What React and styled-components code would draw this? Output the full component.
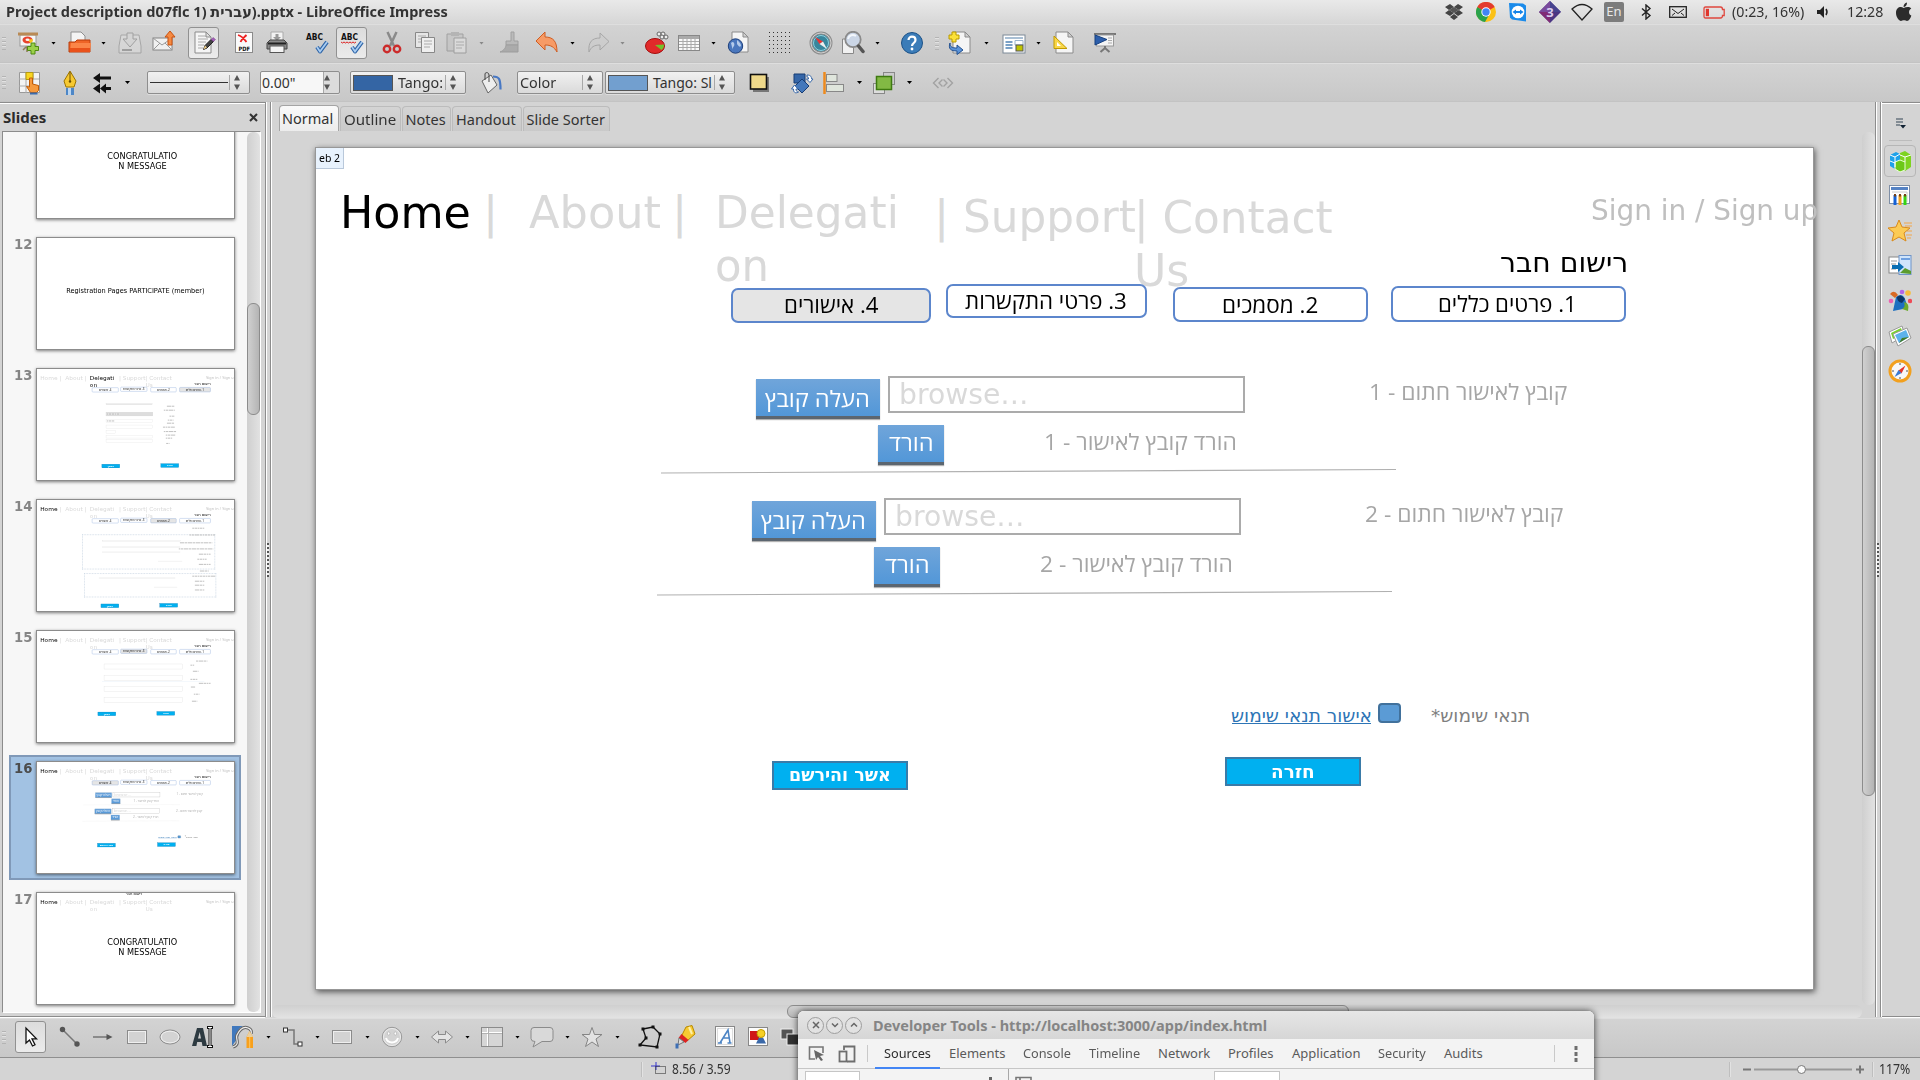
import React, { useLayoutEffect, useRef } from "react";
import styled, { createGlobalStyle, css } from "styled-components";

const UI = `"Noto Sans", "Open Sans", sans-serif`;
const DEJAVU = `"DejaVu Sans", sans-serif`;
const HEB = `"Open Sans", "DejaVu Sans", sans-serif`;

const Global = createGlobalStyle`
  * { box-sizing: border-box; }
  html, body { margin: 0; padding: 0; background: #d4d4d4; overflow: hidden; }
  body { font-family: ${UI}; font-size: 14px; color: #333; }
`;

/* ---------- text fitted to a width ---------- */
const FitBox = styled.span`
  display: inline-flex;
  flex: none;
  direction: ltr;
  width: ${(p) => p.$w}px;
  white-space: pre;
`;
const FitInner = styled.span`
  flex: none;
  display: block;
  transform-origin: 0 50%;
  direction: ${(p) => (p.$rtl ? "rtl" : "ltr")};
`;
function Fit({ w, rtl, children }) {
  const ref = useRef(null);
  useLayoutEffect(() => {
    const el = ref.current;
    if (el.offsetWidth) el.style.transform = `scaleX(${w / el.offsetWidth})`;
  }, [w]);
  return (
    <FitBox $w={w}>
      <FitInner ref={ref} $rtl={rtl}>{children}</FitInner>
    </FitBox>
  );
}

/* ---------- frame ---------- */
const Screen = styled.div`
  position: relative;
  display: flex;
  flex-direction: column;
  width: 1920px;
  height: 1080px;
  overflow: hidden;
  background: #d4d4d4;
`;
const MenuBar = styled.header`
  display: flex;
  align-items: center;
  height: 24px;
  padding: 0 8px 0 6px;
  background: linear-gradient(#e9e9e9, #d6d6d6);
  justify-content: space-between;
`;
const WindowTitle = styled.div`
  font-family: "Noto Sans", "Open Sans", "DejaVu Sans", sans-serif;
  font-weight: 700;
  font-size: 15px;
  line-height: 20px;
  height: 24px;
  padding-top: 1px;
  color: #333;
`;
const HebRun = styled.span`
  font-family: "DejaVu Sans", sans-serif;
`;
const Tray = styled.div`
  display: flex;
  align-items: center;
  height: 24px;
  font-size: 15px;
  color: #333;
`;
const TrayText = styled.div`
  height: 24px;
  line-height: 22px;
`;
const TraySlot = styled.div`
  display: flex;
  flex: none;
  align-items: center;
  justify-content: center;
  width: ${(p) => p.$w}px;
`;
const LangBox = styled.div`
  width: 20px;
  height: 20px;
  border-radius: 2px;
  background: #7c7c7c;
  color: #e9e9e9;
  font-size: 13px;
  line-height: 19px;
  text-align: center;
`;

const ToolBar = styled.div`
  display: flex;
  align-items: center;
  flex: none;
  height: ${(p) => p.$h || 39}px;
  padding-bottom: ${(p) => p.$pb || 0}px;
  border-top: 1px solid #dedede;
  border-bottom: 1px solid ${(p) => p.$line || "#c3c3c3"};
  background: linear-gradient(#d3d3d3, #c8c8c8);
`;
const Slot = styled.div`
  display: flex;
  flex: none;
  align-items: center;
  justify-content: center;
  width: ${(p) => p.$w || 24}px;
  height: 32px;
  margin-left: ${(p) => p.$ml || 0}px;
  opacity: ${(p) => (p.$dim ? 0.38 : 1)};
  filter: ${(p) => (p.$dim ? "grayscale(1)" : "none")};
  ${(p) =>
    p.$on &&
    css`
      border: 1px solid #919191;
      border-radius: 3px;
      background: linear-gradient(#dcdcdc, #ebebeb);
    `}
`;
const Grip = styled.div`
  flex: none;
  width: 4px;
  height: 13px;
  margin-left: ${(p) => p.$ml}px;
  margin-right: 2px;
  background: repeating-linear-gradient(#b4b4b4 0 1px, #e2e2e2 1px 2px, transparent 2px 4px);
`;
const Caret = styled.div`
  flex: none;
  width: 8px;
  height: 3px;
  padding-left: 1px;
  margin-left: ${(p) => p.$ml}px;
  &::after {
    content: "";
    display: block;
    width: 5px;
    height: 3px;
    clip-path: polygon(0 0, 100% 0, 50% 100%);
    background: ${(p) => (p.$dim ? "#888" : "#000")};
  }
`;
const Combo = styled.div`
  display: flex;
  align-items: center;
  flex: none;
  width: ${(p) => p.$w}px;
  height: 23px;
  margin-left: ${(p) => p.$ml}px;
  padding: 0 8px 0 ${(p) => p.$pl || 2}px;
  border: 1px solid #8e8e8e;
  border-radius: 2px;
  background: ${(p) => (p.$entry ? "linear-gradient(90deg, #f7f7f7 62px, #a8a8a8 62px 63px, #dcdcdc 63px)" : "linear-gradient(#f1f1f1, #dadada)")};
  font-size: 14px;
  color: #333;
  box-shadow: 0 1px 0 #dedede;
`;
const Grow = styled.div`
  flex: 1;
`;
const Rule = styled.div`
  width: 78px;
  height: 1px;
  background: #333;
`;
const Swatch = styled.div`
  flex: none;
  width: ${(p) => p.$w || 40}px;
  height: 16px;
  margin-right: 5px;
  border: 1px solid #555;
  background: ${(p) => p.$c};
`;
const Sep = styled.div`
  flex: none;
  width: 1px;
  height: 15px;
  margin-right: 3px;
  background: #a8a8a8;
`;

/* ---------- work area ---------- */
const Middle = styled.main`
  display: flex;
  flex: none;
  height: 916px;
`;
const LeftPane = styled.aside`
  display: flex;
  flex-direction: column;
  width: 265px;
  height: 915px;
  border-top: 1px solid #8c8c8c;
  border-bottom: 1px solid #8c8c8c;
  box-shadow: inset 0 1px 0 #fff, 0 1px 0 #fff;
`;
const PaneHead = styled.div`
  display: flex;
  align-items: center;
  justify-content: space-between;
  height: 28px;
  padding: 1px 7px 1px 3px;
  font-size: 15px;
  font-weight: 700;
  color: #2b2b2b;
`;
const ListFrame = styled.div`
  display: flex;
  width: 259px;
  height: 882px;
  margin-left: 2px;
  border: 1px solid #8c8c8c;
  border-bottom-color: #fff;
  border-right-color: #fff;
  background: #f7f7f7;
`;
const List = styled.div`
  display: flex;
  flex-direction: column;
  flex: 1;
  height: 880px;
  overflow: hidden;
  > :first-child { margin-top: -32px; }
`;
const ThumbRow = styled.div`
  display: flex;
  flex: none;
  width: 232px;
  height: 125px;
  margin: 0 0 6px 6px;
  border: 2px solid ${(p) => (p.$sel ? "#8099b8" : "transparent")};
  background: ${(p) => (p.$sel ? "#a2c2e3" : "transparent")};
`;
const ThumbNo = styled.div`
  width: 21px;
  padding-top: 1px;
  margin-right: 4px;
  font: 700 14px/20px ${DEJAVU};
  text-align: right;
  color: ${(p) => (p.$sel ? "#4c4c4c" : "#858585")};
`;
const Thumb = styled.div`
  flex: none;
  width: 199px;
  height: 113px;
  margin-top: 4px;
  border: 1px solid #8c8c8c;
  background: #fff;
  overflow: hidden;
  box-shadow: 0 1px 3px rgba(0, 0, 0, 0.5);
`;
const Shrunk = styled.div`
  position: relative;
  width: 1498px;
  height: 841px;
  transform: scale(0.1325);
  transform-origin: 0 0;
`;
const VScroll = styled.div`
  display: flex;
  flex-direction: column;
  flex: none;
  width: 13px;
  height: ${(p) => p.$h}px;
  padding-top: ${(p) => p.$top}px;
  border-radius: 6px;
  background: linear-gradient(90deg, #cfcfcf, #e2e2e2);
`;
const VHandle = styled.div`
  height: ${(p) => p.$len}px;
  border: 1px solid #8c8c8c;
  border-radius: 6px;
  background: linear-gradient(90deg, #d0d0d0, #b4b4b4);
`;
const Splitter = styled.div`
  display: flex;
  align-items: center;
  flex: none;
  width: 7px;
  height: 915px;
  border-left: 1px solid #8c8c8c;
  background: linear-gradient(90deg, #fff 1px, #d4d4d4 1px 4px, #8c8c8c 4px 5px, #fff 5px);
`;
const SplitDots = styled.div`
  width: 2px;
  height: 34px;
  margin-left: 1px;
  background: repeating-linear-gradient(#555 0 2px, #f0f0f0 2px 4px);
`;
const Center = styled.section`
  display: flex;
  flex-direction: column;
  width: 1603px;
`;
const Tabs = styled.nav`
  display: flex;
  align-items: flex-end;
  gap: 1px;
  height: 30px;
  padding: 0 0 1px 7px;
`;
const Tab = styled.div`
  display: flex;
  align-items: center;
  justify-content: center;
  width: ${(p) => p.$w}px;
  height: ${(p) => (p.$on ? 26 : 25)}px;
  padding-right: ${(p) => (p.$on ? 3 : 2)}px;
  padding-bottom: ${(p) => (p.$on ? 1 : 0)}px;
  border: 1px solid ${(p) => (p.$on ? "#a4a4a4" : "#bcbcbc")};
  border-bottom: none;
  border-radius: 4px 4px 0 0;
  background: ${(p) => (p.$on ? "linear-gradient(#fafafa, #ececec)" : "linear-gradient(#d4d4d4, #c9c9c9)")};
  font-size: 14.5px;
  color: #333;
`;
const CanvasRow = styled.div`
  display: flex;
  height: 873px;
`;
const Canvas = styled.div`
  width: 1590px;
  padding: 15px 0 0 43px;
  height: 873px;
`;
const Page = styled.div`
  position: relative;
  width: 1499px;
  height: 843px;
  border: 1px solid #979797;
  background: #fff;
  overflow: clip;
  overflow-clip-margin: 4px;
`;
const PageShadow = styled.div`
  width: 1499px;
  height: 843px;
  box-shadow: 1px 2px 6px rgba(0, 0, 0, 0.6);
`;
const PageTag = styled.div`
  position: absolute;
  left: 0;
  top: 0;
  width: 28px;
  height: 21px;
  padding-left: 3px;
  border: solid #b9c8da;
  border-width: 0 1px 1px 0;
  background: #e8f2fd;
  font-size: 11.5px;
  line-height: 20px;
  color: #000;
`;
const HScroll = styled.div`
  width: 1590px;
  height: 13px;
  padding-left: 515px;
  border-radius: 6px;
  background: linear-gradient(#cfcfcf, #e3e3e3);
`;
const HHandle = styled.div`
  width: 562px;
  height: 13px;
  border: 1px solid #8c8c8c;
  border-radius: 6px;
  background: linear-gradient(#d0d0d0, #b8b8b8);
`;
const SideBar = styled.aside`
  display: flex;
  flex-direction: column;
  align-items: center;
  width: 38px;
  height: 915px;
  border-top: 1px solid #8c8c8c;
  border-bottom: 1px solid #8c8c8c;
  box-shadow: inset 0 1px 0 #fff, 0 1px 0 #fff;
  padding: 8px 2px 0 0;
`;
const SideRule = styled.div`
  width: 23px;
  height: 1px;
  margin: 7px 0 4px;
  background: #bcbcbc;
`;
const SideItem = styled.div`
  display: flex;
  align-items: center;
  justify-content: center;
  width: 32px;
  height: 32px;
  margin-bottom: 3px;
  border: 1px solid ${(p) => (p.$on ? "#b6b6b6" : "transparent")};
  border-radius: 4px;
`;

/* ---------- slide objects, placed on the page canvas ---------- */
const Txt = styled.div`
  position: absolute;
  left: ${(p) => p.$x}px;
  top: ${(p) => p.$y - p.$s * (p.$heb ? 0.97 : 0.928)}px;
  font-family: ${(p) => (p.$heb ? HEB : DEJAVU)};
  font-size: ${(p) => p.$s}px;
  font-weight: ${(p) => (p.$b ? 700 : 400)};
  line-height: 1.164;
  color: ${(p) => p.$c};
  white-space: pre;
`;
const Shape = styled.div`
  position: absolute;
  left: ${(p) => p.$x}px;
  top: ${(p) => p.$y}px;
  width: ${(p) => p.$w}px;
  height: ${(p) => p.$h}px;
`;
const Pill = styled(Shape)`
  border: 2px solid #5c86cc;
  border-radius: 7px;
  background: ${(p) => (p.$on ? "#e5e5e5" : "#fff")};
`;
const BlueButton = styled(Shape)`
  border-bottom: 3px solid #5c6670;
  background: linear-gradient(#70a5da, #5297d8);
  box-shadow: 0 1px 1px rgba(0, 0, 0, 0.3);
`;
const Field = styled(Shape)`
  border: 2px solid ${(p) => p.$c || "#ababab"};
  background: ${(p) => p.$bg || "#fff"};
`;
const CyanButton = styled(Shape)`
  border: 2px solid #3a7ba8;
  background: #00b0f0;
`;
const Check = styled(Shape)`
  border: 2px solid #41719c;
  border-radius: 4px;
  background: #5b9bd5;
`;
const Dotted = styled(Shape)`
  border: 6px dotted #c8d4e2;
`;
const Bar = styled(Shape)`
  background: repeating-linear-gradient(90deg, #c4c4c4 0 14px, #e6e6e6 14px 20px);
`;
const LinkLine = styled(Shape)`
  background: #2e75b6;
`;
const Divider = styled.svg`
  position: absolute;
  left: ${(p) => p.$x}px;
  top: ${(p) => p.$y}px;
`;

/* wide: the roomier face used by headings and buttons */
function Heb({ x, y, w, s = 22, c = "#000", b, wide, children }) {
  return (
    <Txt $x={x} $y={y} $s={s} $c={c} $b={b} $heb={!wide}>
      <Fit w={w} rtl>{children}</Fit>
    </Txt>
  );
}

const GREY = "#d9d9d9";
function Nav({ active = "Home" }) {
  const c = (n) => (n === active ? "#000" : GREY);
  return (
    <>
      <Txt $x={24} $y={81} $s={45} $c={c("Home")}><Fit w={131}>Home</Fit></Txt>
      <Txt $x={167} $y={81} $s={45} $c={GREY}>|</Txt>
      <Txt $x={213} $y={81} $s={45} $c={c("About")}><Fit w={132}>About</Fit></Txt>
      <Txt $x={356} $y={81} $s={45} $c={GREY}>|</Txt>
      <Txt $x={399} $y={81} $s={45} $c={c("Delegation")}><Fit w={184}>Delegati</Fit></Txt>
      <Txt $x={399} $y={133.5} $s={45} $c={c("Delegation")}><Fit w={54}>on</Fit></Txt>
      <Txt $x={618} $y={85} $s={45} $c={GREY}>|</Txt>
      <Txt $x={647} $y={85} $s={45} $c={c("Support")}><Fit w={173}>Support</Fit></Txt>
      <Txt $x={818} $y={86} $s={45} $c={c("Contact")}><Fit w={199}>| Contact</Fit></Txt>
      <Txt $x={818} $y={138.5} $s={45} $c={c("Contact")}><Fit w={55}>Us</Fit></Txt>
      <Txt $x={1275} $y={73} $s={28} $c="#bfbfbf"><Fit w={227}>Sign in / Sign up</Fit></Txt>
    </>
  );
}
function Steps({ active }) {
  return (
    <>
      <Heb x={1184} y={125} w={128} s={28} wide>רישום חבר</Heb>
      <Pill $x={415} $y={140} $w={200} $h={35} $on={active === 4} />
      <Heb x={468} y={165.5} w={94}>4. אישורים</Heb>
      <Pill $x={630} $y={136} $w={201} $h={34} $on={active === 3} />
      <Heb x={649} y={161} w={162}>3. פרטי התקשרות</Heb>
      <Pill $x={857} $y={139} $w={195} $h={35} $on={active === 2} />
      <Heb x={906} y={165} w={96}>2. מסמכים</Heb>
      <Pill $x={1075} $y={138} $w={235} $h={36} $on={active === 1} />
      <Heb x={1122} y={164} w={139}>1. פרטים כללים</Heb>
    </>
  );
}
function UploadGroup({ dx, dy, n }) {
  return (
    <>
      <BlueButton $x={440 + dx} $y={231 + dy} $w={124} $h={40} />
      <Heb x={449 + dx} y={259 + dy} w={105} c="#fff">העלה קובץ</Heb>
      <Field $x={572 + dx} $y={228 + dy} $w={357} $h={37} />
      <Txt $x={583 + dx} $y={257 + dy} $s={28} $c={GREY}><Fit w={130}>browse…</Fit></Txt>
      <Heb x={1053 + dx} y={252.500 + dy} w={198} c="#a6a6a6">{`קובץ לאישור חתום - ${n}`}</Heb>
      <BlueButton $x={562 + dx} $y={277 + dy} $w={66} $h={40} />
      <Heb x={573 + dx} y={303.500 + dy} w={44} c="#fff">הורד</Heb>
      <Heb x={728 + dx} y={302.500 + dy} w={193} c="#a6a6a6">{`הורד קובץ לאישור - ${n}`}</Heb>
      <Divider $x={345 + dx} $y={319.500 + dy} width="736" height="7">
        <line x1="0" y1="5" x2="735" y2="1.5" stroke="#b0b0b0" strokeWidth="1.2" />
      </Divider>
    </>
  );
}
function FooterButtons({ lx, rx, y, left = "המשך", lw = 48 }) {
  return (
    <>
      <CyanButton $x={lx} $y={y + 4} $w={136} $h={29} />
      <Heb x={lx + 68 - lw / 2} y={y + 25} w={lw} s={18} c="#fff" b wide>{left}</Heb>
      <CyanButton $x={rx} $y={y} $w={136} $h={29} />
      <Heb x={rx + 45.5} y={y + 21.500} w={44} s={18} c="#fff" b wide>חזרה</Heb>
    </>
  );
}
function Approvals() {
  return (
    <>
      <Nav />
      <Steps active={4} />
      <UploadGroup dx={0} dy={0} n={1} />
      <UploadGroup dx={-4} dy={122} n={2} />
      <Heb x={915} y={574} w={141} s={18.5} c="#2e75b6" wide>אישור תנאי שימוש</Heb>
      <LinkLine $x={916} $y={575} $w={139} $h={1} />
      <Check $x={1062} $y={555} $w={23} $h={20} />
      <Heb x={1115} y={574} w={99} s={18.5} c="#7f7f7f" wide>תנאי שימוש*</Heb>
      <FooterButtons lx={456} rx={909} y={609} left="אשר והירשם" lw={102} />
    </>
  );
}
const Bars = ({ items }) =>
  items.map(([x, y, w], i) => <Bar key={i} $x={x} $y={y - 4} $w={w} $h={8} />);
function Details() {
  return (
    <>
      <Nav active="Delegation" />
      <Steps active={1} />
      {[[520, 262, 350, 6, "#ddd"], [520, 325, 355, 30, "#ddd"], [520, 378, 355, 26], [520, 422, 355, 28], [520, 465, 75, 22], [520, 500, 355, 22], [520, 530, 355, 28]].map(
        ([x, y, w, h, bg], i) => <Field key={i} $x={x} $y={y} $w={w} $h={h} $c="#dcdcdc" $bg={bg} />
      )}
      <Bars items={[[525, 340, 100], [525, 392, 60], [979, 281, 60], [955, 311, 85], [1000, 356, 40], [985, 386, 45], [980, 409, 55], [950, 439, 90], [955, 472, 95], [970, 499, 75], [970, 522, 50], [975, 562, 25]]} />
      <FooterButtons lx={489} rx={934} y={714} />
    </>
  );
}
function Documents() {
  return (
    <>
      <Nav />
      <Steps active={2} />
      <Dotted $x={341} $y={259} $w={1004} $h={265} />
      <Dotted $x={356} $y={552} $w={997} $h={183} />
      {[[494, 310, 590], [494, 356, 590], [494, 394, 590], [914, 463, 183], [467, 590, 577], [884, 659, 175]].map(
        ([x, y, w], i) => <Field key={i} $x={x} $y={y - 3} $w={w} $h={6} $c="#d8d8d8" />
      )}
      <Bars items={[[1172, 213, 90], [1150, 264, 195], [1078, 323, 245], [1068, 369, 262], [1220, 409, 90], [1210, 447, 70], [1220, 486, 90], [1228, 536, 68], [1172, 575, 176], [1190, 613, 75], [1190, 643, 75], [1190, 679, 75]]} />
      <FooterButtons lx={482} rx={926} y={780} />
    </>
  );
}
function Contacts() {
  return (
    <>
      <Nav />
      <Steps active={3} />
      {[248, 332, 415, 499].map((y) => <Field key={y} $x={505} $y={y} $w={592} $h={40} $c="#d6d6d6" />)}
      <Field $x={495} $y={378} $w={768} $h={5} $c="#d4e2f2" />
      <Bars items={[[1200, 227, 86], [1158, 258, 28], [1175, 304, 44], [1158, 365, 52], [1220, 395, 90], [1160, 423, 34], [1182, 477, 44], [1168, 530, 42]]} />
      <FooterButtons lx={459} rx={904} y={607} />
    </>
  );
}
const Congrats = () => (
  <>
    <Txt $x={531} $y={392} $s={64} $c="#000"><Fit w={526}>CONGRATULATIO</Fit></Txt>
    <Txt $x={613} $y={467} $s={64} $c="#000"><Fit w={366}>N MESSAGE</Fit></Txt>
  </>
);
const Finished = () => (
  <>
    <Heb x={670} y={14} w={125} s={28} wide>רישום חבר</Heb>
    <Nav />
    <Congrats />
  </>
);
const Participate = () => (
  <Txt $x={220} $y={414} $s={50} $c="#000"><Fit w={1044}>Registration Pages PARTICIPATE (member)</Fit></Txt>
);

const slides = [
  ["", Congrats],
  ["12", Participate],
  ["13", Details],
  ["14", Documents],
  ["15", Contacts],
  ["16", Approvals],
  ["17", Finished],
];

/* ---------- icons ---------- */
const Svg = ({ s = 24, children, vb = "0 0 24 24", h }) => (
  <svg width={s} height={h || s} viewBox={vb} fill="none">{children}</svg>
);
const doc = (x = 4, y = 1, w = 15, h = 21) => (
  <path d={`M${x} ${y}h${w - 5}l5 5v${h - 5}h-${w}z M${x + w - 5} ${y}v5h5`} fill="#f5f5f5" stroke="#8b8b8b" />
);
const I = {
  newPres: (
    <Svg><path d="M6 19l4-4M10 15v6" stroke="#8f7b58" strokeWidth="1.500" /><rect x="3" y="4" width="16" height="11" fill="#f6f6f6" stroke="#999" /><path d="M1 3h20" stroke="#b98a55" strokeWidth="3" /><ellipse cx="10.500" cy="9" rx="5" ry="3.400" fill="#e8432d" /><path d="M10.500 9l5-1a5 3.400 0 0 1-2 4z" fill="#f9c51d" /><ellipse cx="10.500" cy="8.800" rx="2" ry="1.300" fill="#f6f6f6" /><path d="M14 12h4v3.500h3.500v4H18V23h-4v-3.500h-3.500v-4H14z" fill="#9bd04a" stroke="#4f8a10" /></Svg>
  ),
  open: (<Svg><path d="M3 1h10l4 4v10H3z" fill="#f4f4f4" stroke="#909090" /><path d="M1 21V11h6l2-2h13v12z" fill="#ef6427" stroke="#b83d0c" /><path d="M3 12h20l-1 9H2z" fill="#fb8548" /><path d="M2 17h20v4H2z" fill="#e9511a" /></Svg>),
  save: (<Svg><path d="M3 4h18l2 11v7H1v-7z" fill="#e6e6e6" stroke="#666" /><path d="M9 2h6v6h4l-7 8-7-8h4z" fill="#ddd" stroke="#555" /><path d="M4 19h10" stroke="#555" strokeWidth="2" /></Svg>),
  mail: (<Svg><rect x="1" y="7" width="19" height="12" fill="#f0f0f0" stroke="#848484" /><path d="M1 7l9 7 10-7M1 19l7-7M20 19l-7-7" stroke="#999" /><path d="M18 0l5 6h-3v8h-4V6h-3z" fill="#f58a42" stroke="#c9510f" /></Svg>),
  edit: (<Svg>{doc(3, 1, 16, 21)}<path d="M6 5h8M6 8h10M6 11h8M6 14h6M6 17h5" stroke="#aaa" /><path d="M11.500 18.500l1.500-4 6-6 2.500 2-6.500 6.500z" fill="#444" stroke="#222" /><path d="M11.500 18.500l1.500-4 2 2z" fill="#f0d08a" /><path d="M19 8.500l2-2 2.500 2-2 2z" fill="#a45fb8" stroke="#6e3c80" strokeWidth=".5" /></Svg>),
  pdf: (<Svg><rect x="3.500" y="1.500" width="17" height="20" fill="#fafafa" stroke="#8b8b8b" /><path d="M6 4c4 1 6 4 8.500 7M14.500 4c-2 2-5 4-6 7" stroke="#e22" strokeWidth="1.800" /><text x="6.500" y="20" fontFamily="DejaVu Sans" fontWeight="700" fontSize="6" textLength="11.5" lengthAdjust="spacingAndGlyphs" fill="#111">PDF</text></Svg>),
  print: (<Svg><path d="M6 1h12v10H6z" fill="#f2f2f2" stroke="#aaa" /><path d="M10.500 3h3v3h2.500l-4 4-4-4h2.500z" fill="#999" /><path d="M2 12l3-3h14l3 3v6H2z" fill="#8a8a8a" stroke="#444" /><path d="M3 12.500h18" stroke="#222" strokeWidth="2" /><rect x="5" y="15" width="14" height="6.500" fill="#f4f4f4" stroke="#555" /></Svg>),
  tick: <path d="M12 16l3 4.500L22 11" stroke="#2f65a8" strokeWidth="4" strokeLinejoin="round" />,
  cut: (<Svg><path d="M7.500 1l6.500 14M16.500 1L10 15" stroke="#8a8a8a" strokeWidth="2.500" /><circle cx="7" cy="18" r="3.200" stroke="#cc2b2b" strokeWidth="2.400" /><circle cx="17" cy="18" r="3.200" stroke="#cc2b2b" strokeWidth="2.400" /></Svg>),
  copy: (<Svg><path d="M2.500 1.500h13v15h-13z" fill="#e6e6e6" stroke="#888" /><path d="M5 5h8M5 8h8M5 11h6" stroke="#aaa" /><path d="M8.500 6.500h13v15h-13z" fill="#efefef" stroke="#888" /><path d="M11 10h8M11 13h8M11 16h6" stroke="#aaa" /></Svg>),
  paste: (<Svg><path d="M2 3h16v17H2z" fill="#bbb" stroke="#555" /><path d="M6 1h8v4H6z" fill="#888" /><path d="M9 7h12v15H9z" fill="#eee" stroke="#555" /><path d="M11 11h8M11 14h8M11 17h6" stroke="#777" /></Svg>),
  brush: (<Svg><path d="M14 1h3v9h4v4H9v-4h5z" fill="#999" stroke="#555" /><path d="M9 14h12v7H3c3-1 6-4 6-7z" fill="#777" stroke="#555" /></Svg>),
  undo: (<Svg><path d="M10 1v5c8 0 12 4 12 15-3-5-6-7-12-7v5L1 10z" fill="#f79b66" stroke="#cf5d22" /></Svg>),
  redo: (<Svg><path d="M14 2v5C6 7 2 11 3 21c2-5 5-7 11-7v5l9-8.500z" fill="#ccc" stroke="#666" /></Svg>),
  chart: (<Svg><ellipse cx="10" cy="15" rx="9.500" ry="7.500" fill="#e12a2a" stroke="#a40e0e" /><path d="M10 14l9-.500c.3 3-1 4-2.500 5.500z" fill="#73c22a" /><circle cx="14" cy="3" r="2" fill="#eee" stroke="#666" /><circle cx="18" cy="3" r="2" fill="#eee" stroke="#666" /><circle cx="17" cy="6" r="2" fill="#eee" stroke="#666" /><circle cx="21" cy="6" r="2" fill="#eee" stroke="#666" /></Svg>),
  table: (<Svg><rect x="1.500" y="4.500" width="21" height="15" fill="#fafafa" stroke="#888" /><path d="M2 6.500h20" stroke="#aaa" strokeWidth="3" /><path d="M2 10.500h20M2 13.500h20M2 16.500h20M6 8v11M10 8v11M14 8v11M18 8v11" stroke="#aaa" /></Svg>),
  web: (<Svg>{doc(5, 1, 16, 20)}<circle cx="8.500" cy="15" r="7.200" fill="#4a77bd" stroke="#1d3f7c" /><path d="M4 12c3-3 4 2 3 3s-2 3-1 5M10 9c2 2 4 3 4 6-2 2-3-1-4-2" fill="#b4cbea" /></Svg>),
  dots: (<Svg>{[1, 5, 9, 13, 17, 21].map((y) => <path key={y} d={`M1 ${y + .5}h23`} stroke="#333" strokeDasharray="1 3" />)}</Svg>),
  compass: (<Svg><circle cx="12" cy="12" r="10" fill="#39869c" stroke="#8e8e8e" strokeWidth="3" /><circle cx="12" cy="12" r="10" stroke="#d2d2d2" /><circle cx="12" cy="12" r="7.500" stroke="#8fd0de" /><path d="M6 6l8 4.500L10.500 13z" fill="#e33" /><path d="M18 18l-7.500-5 3.500-2.500z" fill="#eee" /></Svg>),
  zoom: (<Svg><path d="M1.500 8h11v14.500h-11z" fill="#f1f1f1" stroke="#888" /><circle cx="12" cy="8.500" r="7.700" fill="#cbd6e6" stroke="#8a8a8a" strokeWidth="1.800" /><path d="M7 8c1-4 5-5 8-3" stroke="#f3f7fc" strokeWidth="2" /><path d="M17.500 15l4.500 5.500" stroke="#555" strokeWidth="3.500" strokeLinecap="round" /></Svg>),
  help: (<Svg><circle cx="12" cy="12" r="10.500" fill="#3b7cb8" stroke="#1c5288" /><path d="M8.500 9c0-4.500 7-4.500 7 0 0 3-3.500 3-3.500 6" stroke="#fff" strokeWidth="2.200" /><circle cx="12" cy="18" r="1.400" fill="#fff" /></Svg>),
  insert: (<Svg>{doc(5, 1, 17, 21)}<path d="M4 1h4v3h3v4H8v3H4V8H1V4h3z" fill="#fbe13a" stroke="#b99a00" /><path d="M2 12c0 4 2 5 7 5v-3l6 5-6 4.500V20c-6 0-9-2-7-8z" fill="#5b93d8" stroke="#23508f" /></Svg>),
  layout: (<Svg><rect x="1" y="4" width="22" height="18" fill="#fff" stroke="#7d8a98" /><path d="M3 7h18" stroke="#a9bfd4" strokeWidth="2" /><path d="M3.500 11h7M3.500 14h7M3.500 17h7" stroke="#4f83b5" strokeWidth="1.300" /><path d="M13 9.500h8V14h-8z" stroke="#9ab4cd" /><rect x="14" y="14" width="7" height="6" fill="#bfc400" stroke="#555" /></Svg>),
  ruler: (<Svg>{doc(4, 1, 17, 21)}<path d="M2 5v12.500h13z" fill="#f8d648" stroke="#c19a00" /><path d="M5 11v4h4z" fill="#fff" /></Svg>),
  show: (<Svg><path d="M1 3h22" stroke="#777" strokeWidth="2" /><rect x="3.500" y="4" width="17" height="11" fill="#f4f4f4" stroke="#999" /><path d="M2 4l12 4.500L2 14z" fill="#2c5eab" stroke="#16407f" /><path d="M15 7h4M15 9.500h4M15 12h4" stroke="#aaa" /><path d="M12 15v2M7.500 21l4.500-4 4.500 4" stroke="#777" strokeWidth="2" /></Svg>),
  hand: (<Svg><path d="M1.500 1.500h20v20h-20z" fill="#f4f4f4" stroke="#999" /><path d="M1 8h20M1 15h20M8 2v20M15 2v20" stroke="#aaa" /><path d="M8 1.500h7v7H8z" fill="#f9d622" stroke="#b59a10" /><path d="M11.500 7h3v6l6 1.500v5l-2 2h-6l-4-6 3 .5z" fill="#f69a3d" stroke="#c25d06" /><path d="M12 21.500h7.500v2H12z" fill="#3b6cae" /></Svg>),
  pen: (<Svg><path d="M12 0l6 10-2 6H8l-2-6z" fill="#f6c932" stroke="#9c7400" /><path d="M12 1v9" stroke="#6b4d00" /><circle cx="12" cy="10.500" r="1.200" fill="#6b4d00" /><path d="M8 17h8v7H8z" fill="#4d87c7" /><path d="M10 17h3v7h-3z" fill="#bcd5ef" /></Svg>),
  ends: (<Svg><path d="M3 7l7-5v3.500h11v3H10V12z M3 17.500l7-5v10z M10 17.500l6-5v10z M15 16h6v3h-6z" fill="#111" /></Svg>),
  bucket: (<Svg><path d="M3 10l9-6 6 10-9 8z" fill="#eee" stroke="#666" /><path d="M6 9V3c0-2 4-2 4 1v7" stroke="#444" /><path d="M14 5.500c6 0 7.500 2 7.500 13" stroke="#4878c4" strokeWidth="2.200" /></Svg>),
  shadow: (<Svg><rect x="5" y="6" width="16" height="15" fill="#777" /><rect x="2.500" y="3.500" width="16" height="14.500" fill="#efd98a" stroke="#111" strokeWidth="1.600" /></Svg>),
  rotate: (<Svg><path d="M4 3h11v9H4z" fill="#3566a8" stroke="#173d74" /><path d="M12 8l7 7-7 7-7-7z" fill="#4478bb" stroke="#173d74" /><path d="M17 4c4 0 4.500 2 4.500 4h1.500l-3 3.500L16.500 8h2c0-2-.5-2-1.500-2zM4.500 14l3.500 4H6c0 2 1 3 2.500 3-3.500 2-5 0-5-3h-2z" fill="#fff" stroke="#3566a8" /></Svg>),
  align: (<Svg><path d="M2.500 1v22" stroke="#ee8a1c" strokeWidth="2.500" /><rect x="4.500" y="3.500" width="10.500" height="7" fill="#dfe5dc" stroke="#888" /><rect x="4.500" y="13.500" width="17" height="7" fill="#dfe5dc" stroke="#888" /></Svg>),
  arrange: (<Svg><rect x="11.500" y="1.500" width="11" height="12" fill="#ccc" stroke="#888" /><rect x="1.500" y="12.500" width="11" height="10" fill="#ddd" stroke="#888" /><rect x="4.500" y="5.500" width="15" height="13" fill="#82b944" stroke="#3e7a10" strokeWidth="1.500" /></Svg>),
  points: (<Svg><path d="M7.500 7l-5 5 5 5M11.500 8.500L8 12l3.500 3.500M16.500 7l5 5-5 5M12.500 8.500L16 12l-3.500 3.500" stroke="#a2a2a2" strokeWidth="1.400" /></Svg>),
  pointer: (<Svg><path d="M7 3v15l3.500-3 3 6 2.500-1.200-3-6h4.500z" fill="#fff" stroke="#111" strokeWidth="1.300" /></Svg>),
  line: (<Svg><path d="M4.500 4.500l14 14" stroke="#777" strokeWidth="1.500" /><circle cx="4.500" cy="4.500" r="2.700" fill="#555" /><circle cx="19" cy="19" r="2.700" fill="#555" /></Svg>),
  arrow: (<Svg><path d="M2 12h15" stroke="#666" strokeWidth="1.300" /><path d="M15.500 9l6 3-6 3z" fill="#555" /></Svg>),
  rect: (<Svg><rect x="2.500" y="5.500" width="19" height="13" fill="#d3d3d3" stroke="#8b8b8b" /><rect x="3.500" y="6.500" width="17" height="11" stroke="#efefef" /></Svg>),
  ellipse: (<Svg><ellipse cx="12" cy="12" rx="10" ry="7" fill="#d3d3d3" stroke="#8b8b8b" /><ellipse cx="12" cy="12" rx="8.800" ry="5.800" stroke="#efefef" /></Svg>),
  text: (<Svg><path d="M1 21L6 3h6l4 18h-4.500l-.8-4H6.200l-.8 4zM7 13.500h3L8.700 7z" fill="#2d3a41" /><path d="M16 2.500h6M19 3v18M16 21.500h6" stroke="#111" strokeWidth="3" /><path d="M17 2.500h4M19 3v18M17 21.500h4" stroke="#fff" /></Svg>),
  curve: (<Svg><path d="M1 1h11C4 5 10 9 6 14l-5 7z" fill="#4078bd" /><path d="M2 22c8-3 2-8 4-12S12 1 17 3s3 5 3 6" stroke="#666" strokeWidth="3.200" /><path d="M2 22c8-3 2-8 4-12S12 1 17 3s3 5 3 6" stroke="#eee" strokeWidth="1.200" /><path d="M15.500 12l3-6 3.500 6v11h-6.500z" fill="#f8a01c" /><path d="M15.500 12l3-6 3.500 6z" fill="#e9cfa0" /><path d="M18.700 12v11" stroke="#fcc765" /></Svg>),
  connector: (<Svg><path d="M6 5h7v14h5" stroke="#777" strokeWidth="1.500" /><rect x="2.500" y="3" width="4" height="4" fill="#fff" stroke="#333" /><rect x="17" y="17" width="4" height="4" fill="#fff" stroke="#333" /></Svg>),
  smile: (<Svg><circle cx="12" cy="12" r="9.700" fill="#d3d3d3" stroke="#999" /><circle cx="12" cy="12" r="8.500" stroke="#ececec" /><ellipse cx="8.700" cy="8.500" rx="1.200" ry="1.700" fill="#fff" stroke="#aaa" strokeWidth=".6" /><ellipse cx="15.300" cy="8.500" rx="1.200" ry="1.700" fill="#fff" stroke="#aaa" strokeWidth=".6" /><path d="M6 13c2 6 10 6 12 0" stroke="#fff" strokeWidth="2" /></Svg>),
  dbl: (<Svg><path d="M1.500 12l7-6v3.500h7V6l7 6-7 6v-3.500h-7V18z" fill="#e4e4e4" stroke="#8b8b8b" /></Svg>),
  flow: (<Svg><rect x="1.500" y="2.500" width="21" height="19" fill="#d6d6d6" stroke="#8b8b8b" /><path d="M2 7.500h20M7.500 3v18" stroke="#fff" /><path d="M2 8.500h20M8.500 3v18" stroke="#b2b2b2" /></Svg>),
  callout: (<Svg><path d="M4 2.500h16q3 0 3 3v8q0 3-3 3h-8L3 22l2-5.500q-4 0-4-3v-8q0-3 3-3z" fill="#d9d9d9" stroke="#8b8b8b" /></Svg>),
  star: (<Svg><path d="M12 2.500l2.500 7h7.500l-6 4.500 2.500 7.500L12 17l-6.500 4.500L8 14 2 9.500h7.500z" fill="#e2e2e2" stroke="#858585" /></Svg>),
  poly: (<Svg><path d="M5 4l10-2 7 7-3 13L2 20l6-7z" stroke="#111" strokeWidth="1.300" />{[[5, 4], [15, 2], [22, 9], [19, 22], [2, 20], [8, 13]].map(([x, y]) => <rect key={x} x={x - 1.500} y={y - 1.500} width="3" height="3" fill="#111" />)}</Svg>),
  glue: (<Svg><path d="M13 2l6-1.500L22 9l-8 7-5-6z" fill="#f7c933" stroke="#b78a00" /><path d="M16 2l3 7" stroke="#fdf0a8" strokeWidth="2" /><path d="M8.500 9l7 6-3 3-7-5z" fill="#dc2222" /><path d="M6 13l5 4-6 3z" fill="#ddd" stroke="#777" /><path d="M4 18.500v5" stroke="#3d6fb5" strokeWidth="3" /></Svg>),
  fontwork: (<Svg><rect x="2.500" y="1.500" width="19" height="20" fill="#fdfdfd" stroke="#888" /><path d="M4.500 3.500h15v16h-15z" stroke="#bbb" strokeDasharray="1 1" /><path d="M7 18L15 5l2 13M10 13h6M5 18h4M14.500 18h4" stroke="#4c84c4" strokeWidth="1.600" /></Svg>),
  image: (<Svg><rect x="2.500" y="2.500" width="19" height="18" fill="#fdfdfd" stroke="#888" /><path d="M4 6h9v9H4z" fill="#cf1717" /><path d="M10 18.500l3-6h4l3 6z" fill="#3a68a8" /><circle cx="15" cy="8.500" r="4" fill="#f7d025" stroke="#c19c00" /></Svg>),
  extrude: (<Svg><rect x="1" y="4" width="12" height="10" fill="#555" stroke="#eee" /><rect x="7" y="9" width="14" height="11" fill="#333" stroke="#eee" /></Svg>),
};
const Abc = ({ wavy }) => (
  <Svg>
    <text x="1" y="9" fontFamily="DejaVu Sans" fontWeight="700" fontSize="8.500" textLength="17" lengthAdjust="spacingAndGlyphs" fill="#111">ABC</text>
    {wavy && <path d="M1 11l1.500 1 1.500-1 1.500 1 1.500-1 1.500 1 1.500-1 1.500 1 1.500-1 1.500 1 1.500-1" stroke="#d22" />}
    {I.tick}
    <path d="M12 16l3 4.500L22 11" stroke="#a9cdf2" strokeWidth="1.800" />
  </Svg>
);
const Spin = () => (
  <svg width="8" height="15" viewBox="0 0 8 15"><path d="M4 0l3 5.500H1zM4 15l3-5.500H1z" fill="#555" /></svg>
);

/* [icon, gap before, options] — "v" is a drop-down caret, "g" a grip */
const standard = [
  ["g", 2], [I.newPres, 9], ["v", 9], [I.open, 10], ["v", 8], [I.save, 10, { dim: 1 }], [I.mail, 10],
  [I.edit, 12, { on: 1 }], [I.pdf, 13], [I.print, 9], [<Abc />, 16], [<Abc wavy />, 7, { on: 1 }],
  [I.cut, 13], [I.copy, 9], [I.paste, 8, { dim: 1 }], ["v", 9, { dim: 1 }], [I.brush, 11, { dim: 1 }],
  [I.undo, 14], ["v", 10], [I.redo, 9, { dim: 1 }], ["v", 9, { dim: 1 }], [I.chart, 18], [I.table, 8],
  ["v", 9], [I.web, 9], [I.dots, 17], [I.compass, 17], [I.zoom, 8], ["v", 9], [I.help, 18], ["g", 11],
  [I.insert, 7], ["v", 11], [I.layout, 11], ["v", 9], [I.ruler, 9], [I.show, 17],
];
const drawing = [
  ["g", 2], [I.pointer, 7, { on: 1 }], [I.line, 12], [I.arrow, 9], [I.rect, 10], [I.ellipse, 9], [I.text, 9],
  [I.curve, 16], ["v", 10], [I.connector, 8], ["v", 9], [I.rect, 8], ["v", 10], [I.smile, 8], ["v", 10],
  [I.dbl, 8], ["v", 10], [I.flow, 8], ["v", 10], [I.callout, 8], ["v", 10], [I.star, 8], ["v", 10],
  [I.poly, 16], [I.glue, 11], [I.fontwork, 16], [I.image, 9], [I.extrude, 10],
];
const Tools = ({ items }) =>
  items.map(([ic, ml, o = {}], i) =>
    ic === "v" ? <Caret key={i} $ml={ml} $dim={o.dim} />
      : ic === "g" ? <Grip key={i} $ml={ml} />
        : <Slot key={i} $ml={ml} $w={o.on ? 31 : 24} $on={o.on} $dim={o.dim}>{ic}</Slot>
  );

const side = [
  <Svg><path d="M2 6l6-3 4 2v8l-5 7-5-3z" fill="#1ea2ea" /><path d="M12 4l5-2 6 4v12l-6 4-5-3z" fill="#7ed321" /><path d="M7 13l5-2 5 2v8l-5 2-5-3z" fill="#6cc818" stroke="#eaffd8" /><path d="M2 6l5 2v10M7 8l5-3M12 6l5 2 6-2M17 8v5M2 12l5 2" stroke="#fff" /></Svg>,
  <Svg><rect x="1.500" y="1.500" width="20" height="18" fill="#fff" stroke="#7f8fa6" /><path d="M3 4.500h17" stroke="#5683c4" strokeWidth="3" /><path d="M4 8h15v10" stroke="#ccc" /><path d="M7 11v10" stroke="#1461d6" strokeWidth="3" /><path d="M12 11v10" stroke="#f3a11d" strokeWidth="3" /><path d="M17 11v10" stroke="#36d413" strokeWidth="3" /><path d="M7 10v2.500M12 10v2.500M17 10v2.500" stroke="#754218" strokeWidth="2" /></Svg>,
  <Svg><path d="M16 4h8M17 7h7M19 12h5M18 16h6M19 19h4" stroke="#f2a64a" /><path d="M11 1l3 7 8 1-6 5 2 8-7-4-7 4 2-8-6-5 8-1z" fill="#fccb55" stroke="#d98a1c" /></Svg>,
  <Svg><rect x="1" y="3" width="12" height="16" fill="#fff" stroke="#888" /><path d="M3 7h6M3 10h5M3 15h5" stroke="#999" /><rect x="11" y="1.500" width="12" height="19" fill="#cfe4fb" stroke="#6f94c8" /><path d="M13 5h9" stroke="#6fa0e0" strokeWidth="2" /><path d="M12 19l5-5 6 3v3z" fill="#5b9c2d" /><path d="M4 11h6V8l6 5-6 5v-3H4z" fill="#0b6fb3" /></Svg>,
  <Svg><path d="M5 22L8 8q6-5 9 2l3 9z" fill="#1d6fc0" /><path d="M9 8q4-4 8 2l-3 4q-5-1-5-6z" fill="#0c3566" /><path d="M2 5q4-5 8 1l-3 3z" fill="#d86a24" /><path d="M16 13q6 1 4 9l-6-2q4-2 2-7z" fill="#6cab2c" /><circle cx="3" cy="12" r="2.300" fill="#ee62b0" /><circle cx="14" cy="3" r="2.300" fill="#b264e8" /><circle cx="20" cy="4" r="2.800" fill="#f7bd3c" /><circle cx="22" cy="12" r="2.200" fill="#ef4b56" /></Svg>,
  <Svg><path d="M1 8l13-6 3 9-13 8z" fill="#fff" stroke="#999" /><path d="M3 9l10-5 2 6-10 5z" fill="#77d42a" /><path d="M5 10l14-6 4 10-13 8z" fill="#fff" stroke="#999" /><path d="M7 11l11-5 3 7-10 6z" fill="#5db2ec" /><path d="M11 19l3-5 7-1z" fill="#447b28" /></Svg>,
  <Svg><circle cx="12" cy="12" r="10" fill="#f7f7f7" stroke="#f2a01e" strokeWidth="3" /><path d="M17.500 6.500l-4 8-3-3z" fill="#e5332a" /><path d="M6.500 18l4-7 3 3z" fill="#3879d0" /><path d="M12 4v2M12 18v2M4 12h2M18 12h2" stroke="#555" /></Svg>,
];

/* ---------- status bar ---------- */
const Status = styled.footer`
  display: flex;
  align-items: center;
  height: 22px;
  font-size: 13.5px;
  color: #333;
`;
const Gap = styled.div`
  flex: none;
  width: ${(p) => p.$w}px;
`;
const StatusSep = styled.div`
  width: 2px;
  height: 15px;
  background: linear-gradient(90deg, #bebebe 50%, #e2e2e2 50%);
`;

/* ---------- browser tools window ---------- */
const Dev = styled.section`
  position: absolute;
  left: 798px;
  top: 1011px;
  width: 796px;
  height: 80px;
  border-radius: 6px 6px 0 0;
  background: #f3f3f3;
  box-shadow: 0 0 7px rgba(0, 0, 0, 0.75), inset 0 1px 0 #f5f5f5;
  overflow: hidden;
`;
const DevTitle = styled.div`
  display: flex;
  align-items: center;
  height: 28px;
  padding-left: 9px;
  background: linear-gradient(#e6e6e6, #d6d6d6);
  font-size: 14.5px;
  font-weight: 700;
  color: #858585;
`;
const RoundBtn = styled.div`
  display: flex;
  align-items: center;
  justify-content: center;
  width: 17px;
  height: 17px;
  margin-right: 2px;
  border: 1px solid #9d9d9d;
  border-radius: 50%;
  background: #e2e2e2;
`;
const DevTabs = styled.div`
  display: flex;
  align-items: center;
  height: 30px;
  padding-left: 10px;
  border-bottom: 1px solid #c6c6c6;
  font-size: 13px;
  color: #555;
`;
const DevTab = styled.div`
  display: flex;
  align-items: center;
  flex: none;
  height: 30px;
  padding: 0 9px;
  color: ${(p) => (p.$on ? "#2d2d2d" : "#5a5a5a")};
  border-bottom: 2px solid ${(p) => (p.$on ? "#4285f4" : "transparent")};
  border-top: 1px solid transparent;
`;
const DevSep = styled.div`
  width: 1px;
  height: 17px;
  background: #c9c9c9;
`;
const DevPanes = styled.div`
  display: flex;
  align-items: flex-start;
  padding-left: 7px;
`;
const PaneTab = styled.div`
  width: ${(p) => p.$w}px;
  height: 20px;
  margin-top: 2px;
  border: 1px solid #c6c6c6;
  background: #fff;
`;
const PaneLine = styled.div`
  width: 1px;
  height: 20px;
  background: #a8a8a8;
`;
const devTabs = [
  ["Sources", 47], ["Elements", 56], ["Console", 48], ["Timeline", 51], ["Network", 52],
  ["Profiles", 46], ["Application", 68], ["Security", 48], ["Audits", 39],
];
const viewTabs = [["Normal", 60, 51], ["Outline", 61, 52], ["Notes", 49, 40], ["Handout", 70, 60], ["Slide Sorter", 87, 78]];

export default function App() {
  return (
    <Screen>
      <Global />
      <MenuBar>
        <WindowTitle><Fit w={442}>Project description d07flc 1) <HebRun>עברית</HebRun>).pptx - LibreOffice Impress</Fit></WindowTitle>
        <Tray>
          <TraySlot $w={32}><Svg s={18} vb="0 0 18 18"><path d="M5 1l4 3-5 3-4-3zM13 1L9 4l5 3 4-3zM0 10l4-3 5 3-4 3zM18 10l-4-3-5 3 4 3zM5 14l4-3 4 3-4 3z" fill="#444" /><path d="M4 7l5-3 5 3-5 3z" fill="#555" /></Svg></TraySlot>
          <TraySlot $w={32}><Svg s={20} vb="0 0 20 20"><circle cx="10" cy="10" r="10" fill="#fbc116" /><path d="M10 10L1.300 5A10 10 0 0 1 18.700 5z" fill="#e33b2e" /><path d="M1.300 5A10 10 0 0 0 9 20l4.500-8L10 10z" fill="#2ba24c" /><path d="M1.300 5h9v5z" fill="#e33b2e" /><circle cx="10" cy="10" r="4.700" fill="#fff" /><circle cx="10" cy="10" r="3.700" fill="#4285f4" /></Svg></TraySlot>
          <TraySlot $w={32}><Svg s={20} vb="0 0 20 20"><path d="M1 1l14 .500 3 2v16l-14-2-2-2z" fill="#1b8bea" /><circle cx="10" cy="10" r="6.300" fill="#fff" /><path d="M4.500 10L8 7.500V9h4V7.500l3.500 2.500-3.500 2.500V11H8v1.500z" fill="#1584e8" /></Svg></TraySlot>
          <TraySlot $w={32}><Svg s={22} vb="0 0 22 22"><path d="M11 0l11 11-11 11L0 11z" fill="#4b3583" /><path d="M11 0l11 11H11z" fill="#46438f" /><path d="M0 11l11 11V11z" fill="#812b75" /><path d="M0 11L11 0v11z" fill="#7a4a9c" /><text x="7.200" y="15.500" fontFamily="Noto Sans" fontSize="13" fontWeight="700" fill="#d9cdee">3</text></Svg></TraySlot>
          <TraySlot $w={32}><Svg s={22} vb="0 0 22 18" h={18}><path d="M1 6q10-9 20 0L11 17z" stroke="#222" strokeWidth="1.300" /></Svg></TraySlot>
          <TraySlot $w={32}><LangBox>En</LangBox></TraySlot>
          <TraySlot $w={32}><Svg s={16} vb="0 0 16 16"><path d="M4 4.500l8 7L8 15V1l4 3.500-8 7" stroke="#222" strokeWidth="1.400" /></Svg></TraySlot>
          <TraySlot $w={32}><Svg s={18} vb="0 0 18 12" h={12}><rect x=".7" y=".7" width="16.600" height="10.600" stroke="#222" strokeWidth="1.300" /><path d="M3 3l6 4.500L15 3M3 9.500L6 7M15 9.500L12 7" stroke="#222" /></Svg></TraySlot>
          <Gap $w={9} />
          <TraySlot $w={22}><Svg s={22} vb="0 0 22 13" h={13}><path d="M2.500 1h15q2 0 2 2.500h1.700v6h-1.700q0 2.500-2 2.500h-15Q1 12 1 10V3q0-2 1.500-2z" stroke="#e0473e" strokeWidth="1.300" /><rect x="2.800" y="2.800" width="3.200" height="7.400" fill="#e0362c" /></Svg></TraySlot>
          <Gap $w={7} /><TrayText><Fit w={72}>(0:23, 16%)</Fit></TrayText>
          <Gap $w={13} />
          <Svg s={12} vb="0 0 12 14" h={14}><path d="M0 5h3l4-4v12L3 9H0z" fill="#222" /><path d="M9 4q2 3 0 6" stroke="#222" strokeWidth="1.500" /></Svg>
          <Gap $w={18} /><TrayText><Fit w={36}>12:28</Fit></TrayText>
          <Gap $w={12} />
          <Svg s={17} vb="0 0 17 20" h={20}><path d="M8.500 6C6 4 1 5 1 11c0 4 3 8 5 8 1 0 1.500-.7 3-.7s2 .7 3 .7c2 0 4-3.500 4.300-5.500-3-1-3-5.500 0-7C14 4 11 5 8.500 6zM8.500 5C8.500 2.500 10 1 12 .5c.2 2.500-1.500 4.500-3.500 4.500z" fill="#2b2b2b" /></Svg>
        </Tray>
      </MenuBar>

      <ToolBar $pb={1}><Tools items={standard} /></ToolBar>
      <ToolBar>
        <Grip $ml={2} />
        <Slot $ml={10}>{I.hand}</Slot>
        <Slot $ml={16}>{I.pen}</Slot>
        <Slot $ml={8}>{I.ends}</Slot>
        <Caret $ml={10} />
        <Combo $ml={15} $w={103}><Rule /><Grow /><Sep /><Spin /></Combo>
        <Combo $ml={10} $w={80} $entry $pl={1}><Fit w={34}>0.00"</Fit><Grow /><Spin /></Combo>
        <Combo $ml={10} $w={116}><Swatch $c="#3465a4" /><Fit w={45}>Tango:</Fit><Grow /><Sep /><Spin /></Combo>
        <Slot $ml={13}>{I.bucket}</Slot>
        <Combo $ml={14} $w={86}><Fit w={36}>Color</Fit><Grow /><Sep /><Spin /></Combo>
        <Combo $ml={2} $w={130}><Swatch $c="#729fcf" /><Fit w={59}>Tango: Sl</Fit><Grow /><Sep /><Spin /></Combo>
        <Slot $ml={13}>{I.shadow}</Slot>
        <Slot $ml={18}>{I.rotate}</Slot>
        <Slot $ml={8}>{I.align}</Slot>
        <Caret $ml={10} />
        <Slot $ml={8}>{I.arrange}</Slot>
        <Caret $ml={10} />
        <Slot $ml={17}>{I.points}</Slot>
      </ToolBar>

      <Middle>
        <LeftPane>
          <PaneHead><Fit w={43}>Slides</Fit><Svg s={9} vb="0 0 9 9"><path d="M1 1l7 7M8 1L1 8" stroke="#333" strokeWidth="2" /></Svg></PaneHead>
          <ListFrame>
            <List>
              {slides.map(([no, Body]) => (
                <ThumbRow key={no} $sel={no === "16"}>
                  <ThumbNo $sel={no === "16"}><Fit w={18}>{no}</Fit></ThumbNo>
                  <Thumb><Shrunk><Body /></Shrunk></Thumb>
                </ThumbRow>
              ))}
            </List>
            <VScroll $h={880} $top={171}><VHandle $len={112} /></VScroll>
          </ListFrame>
        </LeftPane>
        <Splitter><SplitDots /></Splitter>

        <Center>
          <Tabs>
            {viewTabs.map(([t, w, tw], i) => (
              <Tab key={t} $w={w} $on={i === 0}><Fit w={tw}>{t}</Fit></Tab>
            ))}
          </Tabs>
          <CanvasRow>
            <Canvas>
              <PageShadow>
                <Page>
                  <Approvals />
                  <PageTag><Fit w={21}>eb 2</Fit></PageTag>
                </Page>
              </PageShadow>
            </Canvas>
            <VScroll $h={873} $top={214}><VHandle $len={450} /></VScroll>
          </CanvasRow>
          <HScroll><HHandle /></HScroll>
        </Center>

        <Splitter><SplitDots /></Splitter>
        <SideBar>
          <Svg s={22} vb="0 0 22 22"><path d="M7 8h7M7 11h7M7 14h4" stroke="#345" strokeWidth="1.200" /><path d="M11 14h6l-3 3.500z" fill="#123" /></Svg>
          <SideRule />
          {side.map((ic, i) => <SideItem key={i} $on={i === 0}>{ic}</SideItem>)}
        </SideBar>
      </Middle>

      <ToolBar $h={40} $pb={2} $line="#8f8f8f"><Tools items={drawing} /></ToolBar>
      <Status>
        <Gap $w={641} /><StatusSep /><Gap $w={8} />
        <Svg s={16} vb="0 0 16 14" h={14}><path d="M5 0v8M0 4h9" stroke="#33c" /><path d="M4.500 4.500h10v7h-10z" stroke="#222" strokeDasharray="1 1" /></Svg>
        <Gap $w={5} /><Fit w={59}>8.56 / 3.59</Fit>
        <Grow />
        <StatusSep /><Gap $w={11} />
        <Svg s={130} vb="0 0 130 14" h={14}><path d="M1 7.500h8M114 7.500h8M118 3.500v8" stroke="#777" strokeWidth="2" /><path d="M12 7.500h98" stroke="#999" strokeWidth="2" /><circle cx="59.500" cy="7.500" r="4" fill="#fafafa" stroke="#777" /></Svg>
        <StatusSep /><Gap $w={5} /><Fit w={31}>117%</Fit><Gap $w={10} />
      </Status>

      <Dev>
        <DevTitle>
          {["M1 1l6 6M7 1L1 7", "M1 2.500l3 3 3-3", "M1 5.500l3-3 3 3"].map((d) => (
            <RoundBtn key={d}><Svg s={8} vb="0 0 8 8"><path d={d} stroke="#666" strokeWidth="1.500" /></Svg></RoundBtn>
          ))}
          <Gap $w={9} /><Fit w={394}>Developer Tools - http://localhost:3000/app/index.html</Fit>
        </DevTitle>
        <DevTabs>
          <Svg s={17} vb="0 0 17 17"><path d="M15 8V2H1.500v12H7" stroke="#777" strokeWidth="1.600" /><path d="M6 5l10 5-4 1 3 4-2 1-3-4-2 3z" fill="#666" /></Svg>
          <Gap $w={13} />
          <Svg s={18} vb="0 0 18 18"><path d="M6 5V1.500h10.500v15H9" stroke="#6e6e6e" strokeWidth="1.800" /><rect x="1.500" y="6.500" width="7" height="10" stroke="#6e6e6e" strokeWidth="1.800" /></Svg>
          <Gap $w={11} /><DevSep /><Gap $w={7} />
          {devTabs.map(([t, w], i) => <DevTab key={t} $on={i === 0}><Fit w={w}>{t}</Fit></DevTab>)}
          <Grow />
          <DevSep />
          <Gap $w={19} />
          <Svg s={4} vb="0 0 4 16" h={16}><path d="M2 0v4M2 6v4M2 12v4" stroke="#6e6e6e" strokeWidth="3" /></Svg>
          <Gap $w={16} />
        </DevTabs>
        <DevPanes>
          <PaneTab $w={55} /><Gap $w={129} />
          <Svg s={3} vb="0 0 3 14" h={14}><path d="M0 8h3v4H0z" fill="#666" /></Svg>
          <Gap $w={16} /><PaneLine /><Gap $w={6} />
          <Svg s={17} vb="0 0 17 14" h={14}><path d="M1 14V8.500h15V14M5 9v5" stroke="#777" strokeWidth="1.600" /></Svg>
          <Gap $w={182} /><PaneTab $w={66} />
        </DevPanes>
      </Dev>
    </Screen>
  );
}
